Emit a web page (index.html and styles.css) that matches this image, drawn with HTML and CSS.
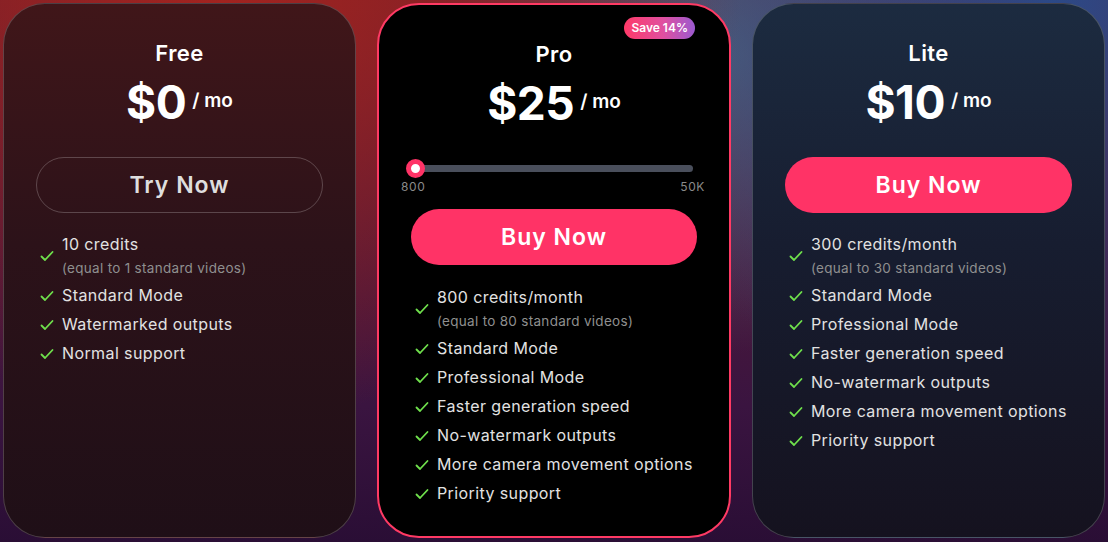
FILE: index.html
```html
<!DOCTYPE html>
<html lang="en">
<head>
<meta charset="utf-8">
<title>Pricing</title>
<link rel="stylesheet" href="styles.css">
</head>
<body>
<svg width="0" height="0" style="position:absolute">
  <defs>
    <symbol id="check" viewBox="0 0 14 12">
      <path d="M1.5 6.5 L5 10 L12.5 2" fill="none" stroke="#6fe04c" stroke-width="1.8" stroke-linecap="round" stroke-linejoin="round"/>
    </symbol>
  </defs>
</svg>
<main class="plans">
  <section class="card card-free">
    <h2 class="title">Free</h2>
    <div class="price"><span class="amount">$0</span><span class="per">/ mo</span></div>
    <button class="btn btn-outline">Try Now</button>
    <ul class="features">
      <li class="feat"><svg class="check"><use href="#check"/></svg><div><div class="main">10 credits</div><div class="sub">(equal to 1 standard videos)</div></div></li>
      <li class="feat"><svg class="check"><use href="#check"/></svg><span>Standard Mode</span></li>
      <li class="feat"><svg class="check"><use href="#check"/></svg><span>Watermarked outputs</span></li>
      <li class="feat"><svg class="check"><use href="#check"/></svg><span>Normal support</span></li>
    </ul>
  </section>

  <section class="card card-pro">
    <span class="badge">Save 14%</span>
    <h2 class="title">Pro</h2>
    <div class="price"><span class="amount">$25</span><span class="per">/ mo</span></div>
    <div class="slider">
      <div class="track"><span class="thumb"></span></div>
      <div class="labels"><span>800</span><span>50K</span></div>
    </div>
    <button class="btn btn-fill btn-pro">Buy Now</button>
    <ul class="features">
      <li class="feat"><svg class="check"><use href="#check"/></svg><div><div class="main">800 credits/month</div><div class="sub">(equal to 80 standard videos)</div></div></li>
      <li class="feat"><svg class="check"><use href="#check"/></svg><span>Standard Mode</span></li>
      <li class="feat"><svg class="check"><use href="#check"/></svg><span>Professional Mode</span></li>
      <li class="feat"><svg class="check"><use href="#check"/></svg><span>Faster generation speed</span></li>
      <li class="feat"><svg class="check"><use href="#check"/></svg><span>No-watermark outputs</span></li>
      <li class="feat"><svg class="check"><use href="#check"/></svg><span>More camera movement options</span></li>
      <li class="feat"><svg class="check"><use href="#check"/></svg><span>Priority support</span></li>
    </ul>
  </section>

  <section class="card card-lite">
    <h2 class="title">Lite</h2>
    <div class="price"><span class="amount">$10</span><span class="per">/ mo</span></div>
    <button class="btn btn-fill">Buy Now</button>
    <ul class="features">
      <li class="feat"><svg class="check"><use href="#check"/></svg><div><div class="main">300 credits/month</div><div class="sub">(equal to 30 standard videos)</div></div></li>
      <li class="feat"><svg class="check"><use href="#check"/></svg><span>Standard Mode</span></li>
      <li class="feat"><svg class="check"><use href="#check"/></svg><span>Professional Mode</span></li>
      <li class="feat"><svg class="check"><use href="#check"/></svg><span>Faster generation speed</span></li>
      <li class="feat"><svg class="check"><use href="#check"/></svg><span>No-watermark outputs</span></li>
      <li class="feat"><svg class="check"><use href="#check"/></svg><span>More camera movement options</span></li>
      <li class="feat"><svg class="check"><use href="#check"/></svg><span>Priority support</span></li>
    </ul>
  </section>
</main>
</body>
</html>
```

FILE: styles.css
```css
* { box-sizing: border-box; }
html, body { margin: 0; padding: 0; }
body {
  width: 1108px;
  height: 542px;
  overflow: hidden;
  font-family: "Inter", "Open Sans", sans-serif;
  color: #fff;
  background:
    radial-gradient(ellipse 520px 420px at 20% 0%, rgba(165,35,30,0.95), rgba(165,35,30,0) 100%),
    radial-gradient(ellipse 480px 420px at 95% 0%, rgba(40,75,140,0.95), rgba(40,75,140,0) 100%),
    radial-gradient(ellipse 300px 300px at 65% 10%, rgba(80,100,125,0.9), rgba(80,100,125,0) 100%),
    linear-gradient(180deg, #6a1f2e 0%, #3a1440 75%, #2a0e35 100%);
}
.plans {
  display: flex;
  gap: 21px;
  padding: 3px 3px 4px 3px;
  height: 542px;
}
.card {
  position: relative;
  flex: 0 0 353px;
  height: 535px;
  border-radius: 42px;
  border: 1.5px solid rgba(255,255,255,0.2);
  padding: 34px 32px 0;
  display: flex;
  flex-direction: column;
  align-items: center;
}
.card-free {
  background: linear-gradient(180deg, #401619 0%, #2c1219 45%, #1f0f17 100%);
}
.card-pro {
  flex-basis: 354px;
  background: #000;
  border: 2px solid #ff3a64;
}
.card-lite {
  background: linear-gradient(180deg, #1c2b40 0%, #171d30 45%, #15121f 100%);
}
.title {
  margin: 0;
  font-size: 22px;
  line-height: 30px;
  font-weight: 600;
  letter-spacing: 0.4px;
}
.price {
  margin-top: 6px;
  height: 56px;
  display: flex;
  align-items: center;
  gap: 6px;
}
.amount {
  font-size: 46px;
  font-weight: 700;
  letter-spacing: -0.5px;
}
.per {
  font-size: 19px;
  font-weight: 600;
  margin-top: -4px;
}
.btn {
  margin-top: 27px;
  width: 100%;
  height: 56px;
  border-radius: 28px;
  font-family: inherit;
  font-size: 23px;
  font-weight: 600;
  letter-spacing: 1px;
  cursor: pointer;
}
.btn-outline {
  background: transparent;
  color: #dedede;
  border: 1px solid rgba(255,255,255,0.22);
}
.btn-fill {
  background: #ff3366;
  color: #fff;
  border: none;
}
.btn-pro { margin-top: 15px; }
.badge {
  position: absolute;
  top: 12px;
  right: 34px;
  height: 22px;
  padding: 0 7px;
  border-radius: 11px;
  font-size: 12px;
  line-height: 22px;
  font-weight: 600;
  background: linear-gradient(90deg, #ff3a68 0%, #e04fa0 55%, #9b5ad0 100%);
}
.slider {
  align-self: stretch;
  margin: 34px -8px 0 -10px;
}
.track {
  position: relative;
  height: 7px;
  margin: 0 12px 0 14px;
  border-radius: 4px;
  background: #4a4f5c;
}
.thumb {
  position: absolute;
  left: -9px;
  top: -6px;
  width: 19px;
  height: 19px;
  border-radius: 50%;
  background: #fff;
  border: 5px solid #ff3366;
}
.labels {
  display: flex;
  justify-content: space-between;
  margin-top: 8px;
  font-size: 12px;
  line-height: 14px;
  letter-spacing: 0.6px;
  color: #8a8a8a;
}
.features {
  list-style: none;
  margin: 19px 0 0;
  padding: 0 0 0 4px;
  align-self: stretch;
}
.card-pro .features { margin-top: 20px; }
.feat {
  display: flex;
  align-items: center;
  gap: 8px;
  min-height: 29px;
  font-size: 16px;
  line-height: 29px;
  color: #e2e2e2;
  letter-spacing: 0.4px;
}
.feat:first-child { padding-bottom: 1px; }
.check {
  width: 14px;
  height: 12px;
  flex: 0 0 14px;
}
.main { line-height: 24px; }
.sub {
  font-size: 13.5px;
  line-height: 24px;
  letter-spacing: 0.3px;
  color: #8f8f8f;
}
```
